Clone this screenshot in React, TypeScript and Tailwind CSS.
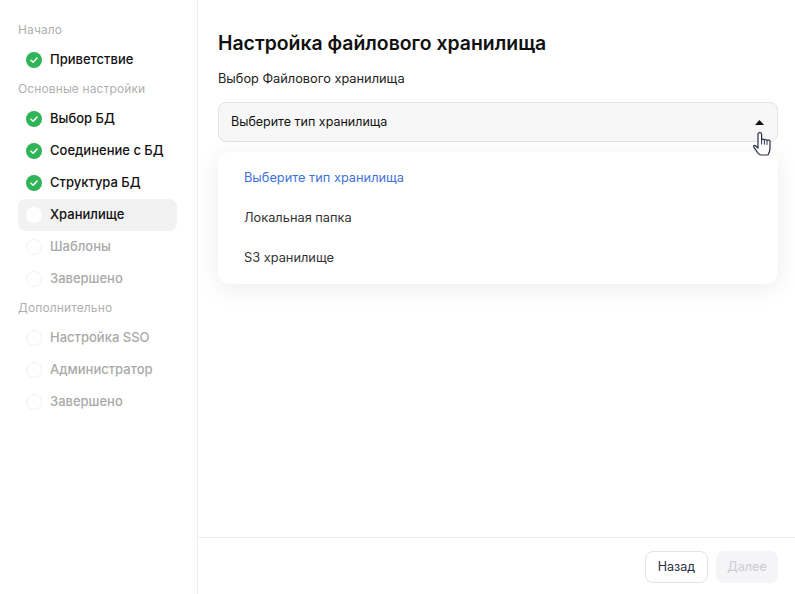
import React from "react";

const font = "font-['Inter','Noto_Sans',sans-serif]";

function Check() {
  return (
    <span className="flex h-4 w-4 items-center justify-center rounded-full bg-[#2fb457]">
      <svg width="10" height="10" viewBox="0 0 10 10" fill="none">
        <path d="M2 5.2 4.2 7.3 8 3" stroke="#fff" strokeWidth="1.5" strokeLinecap="round" strokeLinejoin="round" />
      </svg>
    </span>
  );
}

function Step({ label, state }: { label: string; state: "done" | "active" | "todo" }) {
  return (
    <div className={`flex h-8 items-center rounded-lg pl-[8px] ${state === "active" ? "bg-[#f2f2f2]" : ""}`}>
      {state === "done" ? (
        <Check />
      ) : (
        <span className={`h-4 w-4 rounded-full ${state === "active" ? "bg-white" : "border border-[#f2f2f2] bg-white"}`} />
      )}
      <span className={`ml-[8px] text-[13px] font-medium ${state === "todo" ? "text-[#a9a9a9]" : "text-[#111111]"}`}>{label}</span>
    </div>
  );
}

function Section({ label }: { label: string }) {
  return <div className="flex h-[27px] items-center pb-[2px] text-[12px] tracking-[0.01em] text-[#b0b0b0]">{label}</div>;
}

export default function App() {
  return (
    <div className={`flex h-[594px] w-[795px] overflow-hidden bg-white ${font}`}>
      <aside className="w-[198px] shrink-0 border-r border-[#ebebeb] pl-[18px] pr-[20px] pt-[17px]">
        <Section label="Начало" />
        <Step label="Приветствие" state="done" />
        <Section label="Основные настройки" />
        <Step label="Выбор БД" state="done" />
        <Step label="Соединение с БД" state="done" />
        <Step label="Структура БД" state="done" />
        <Step label="Хранилище" state="active" />
        <Step label="Шаблоны" state="todo" />
        <Step label="Завершено" state="todo" />
        <Section label="Дополнительно" />
        <Step label="Настройка SSO" state="todo" />
        <Step label="Администратор" state="todo" />
        <Step label="Завершено" state="todo" />
      </aside>
      <main className="flex min-w-0 flex-1 flex-col">
        <div className="flex-1 pl-[20px] pr-[17px] pt-[30px]">
          <h1 className="text-[19.4px] font-semibold leading-[26px] text-[#111111]">Настройка файлового хранилища</h1>
          <p className="mt-[14px] text-[12.8px] leading-[18px] text-[#222222]">Выбор Файлового хранилища</p>
          <div className="relative mt-[14px]">
            <div className="flex h-[40px] items-center justify-between rounded-lg border border-[#e3e3e3] bg-[#f7f7f7] pl-[12px] pr-[13px] text-[12.5px] text-[#111111]">
              <span>Выберите тип хранилища</span>
              <svg width="9" height="5" viewBox="0 0 9 5"><path d="M4.5 0 9 5H0z" fill="#111" /></svg>
            </div>
            <div className="absolute left-0 right-0 top-[50px] rounded-xl bg-white py-[6px] text-[12.8px] shadow-[0_4px_24px_rgba(0,0,0,0.08)]">
              <div className="flex h-[40px] items-center pl-[26px] text-[#3f72d9]">Выберите тип хранилища</div>
              <div className="flex h-[40px] items-center pl-[26px] text-[#333333]">Локальная папка</div>
              <div className="flex h-[40px] items-center pl-[26px] text-[#333333]">S3 хранилище</div>
            </div>
            <svg className="absolute right-[7px] top-[30px]" width="18" height="25" viewBox="0 0 18 25" fill="none">
              <path
                d="M5 2.200c0-2 3.600-2 3.600 0V8c.2-1.200 2.600-1.200 2.800.2 .2-1 2.400-1 2.600.3 .3-.8 2.900-.5 3 .8V16c0 3-.8 5-2 7H8c-1.200 0-2-.6-2.800-1.600L.9 15.200c-.8-1.200.3-2.400 1.600-1.500L5 16z"
                fill="#fff"
                stroke="#2a2e45"
                strokeWidth="1.200"
                strokeLinejoin="round"
              />
              <path d="M8.600 8v4M11.400 8.200v4M14 8.500v4" stroke="#2a2e45" strokeWidth="1" strokeLinecap="round" />
            </svg>
          </div>
        </div>
        <footer className="flex h-[57px] items-start justify-end gap-[8px] border-t border-[#ebebeb] pr-[17px] pt-[13px]">
          <button className="h-[32px] w-[63px] rounded-lg border border-[#e3e3e3] bg-white text-[12.5px] text-[#2a2e45]">Назад</button>
          <button className="h-[32px] w-[62px] rounded-lg bg-[#f5f5f7] text-[12.5px] font-medium text-[#cfd0d6]">Далее</button>
        </footer>
      </main>
    </div>
  );
}
